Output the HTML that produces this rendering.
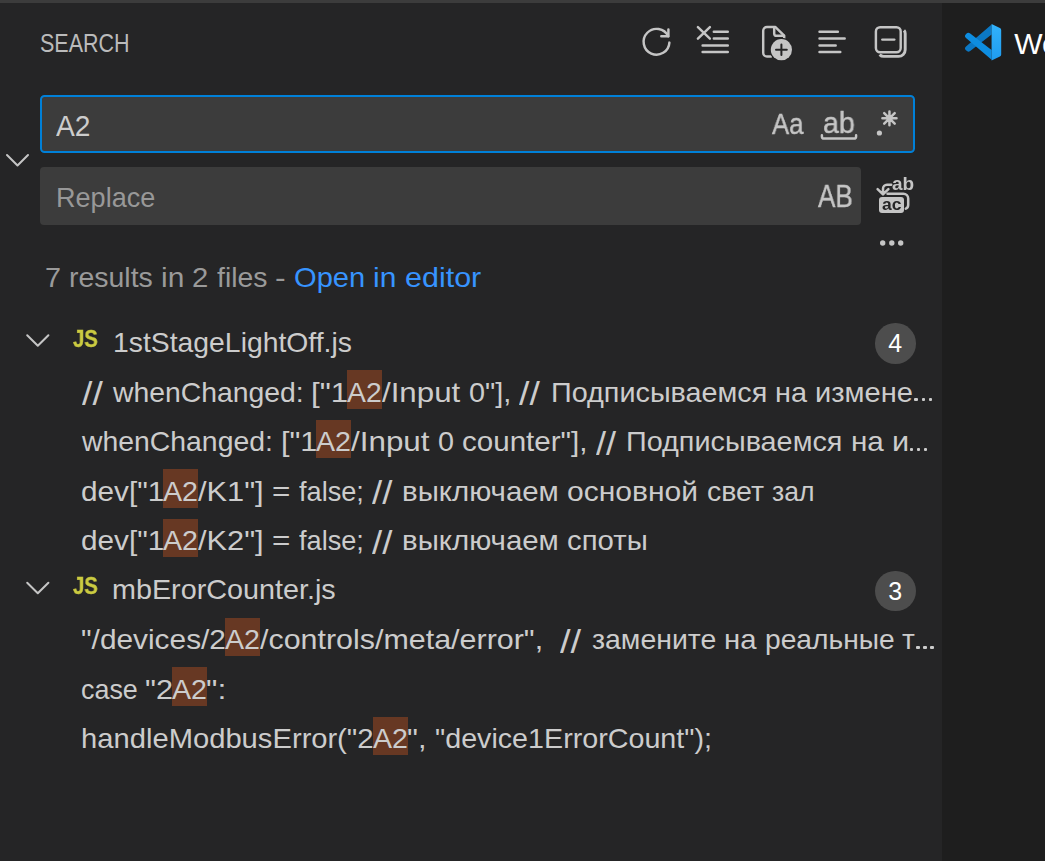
<!DOCTYPE html>
<html><head><meta charset="utf-8"><title>Search</title>
<style>
html,body{margin:0;padding:0;}
body{width:1045px;height:861px;overflow:hidden;background:#252526;position:relative;font-family:"Liberation Sans",sans-serif;}
.abs{position:absolute;}
.g{will-change:transform;}
.b{-webkit-text-stroke:0.45px #c5c5c5;}
.j{-webkit-text-stroke:0.35px #cbcb41;}
.dot{position:absolute;width:3.3px;height:3.3px;background:#cccccc;border-radius:1px;}
.t{position:absolute;white-space:pre;transform-origin:0 0;font-family:"Liberation Sans",sans-serif;}
.hl{position:absolute;background:#673823;width:35px;height:38.6px;}
.badge{position:absolute;width:40.5px;height:40.5px;border-radius:50%;background:#4d4d4d;color:#fff;font-size:25px;line-height:40.5px;text-align:center;}
svg{position:absolute;overflow:visible;}
</style></head><body>
<!-- backgrounds -->
<div class="abs" style="left:942px;top:0;width:103px;height:861px;background:#1e1e1e"></div>
<div class="abs" style="left:0;top:0;width:1045px;height:3px;background:#3c3c3c"></div>
<!-- search input -->
<div class="abs" style="left:40px;top:94.8px;width:875px;height:58.2px;box-sizing:border-box;border:2.25px solid #0080d8;border-radius:4.5px;background:#3c3c3c"></div>
<!-- replace input -->
<div class="abs" style="left:40px;top:167px;width:821px;height:58px;border-radius:4px;background:#3c3c3c"></div>
<!-- match highlights -->
<div class="hl" style="left:347px;top:370px"></div>
<div class="hl" style="left:316px;top:419.5px"></div>
<div class="hl" style="left:163px;top:469px"></div>
<div class="hl" style="left:163px;top:518.5px"></div>
<div class="hl" style="left:225px;top:617.5px"></div>
<div class="hl" style="left:172px;top:667px"></div>
<div class="hl" style="left:373px;top:716.5px"></div>
<!-- badges -->
<div class="badge" style="left:875px;top:323px">4</div>
<div class="badge" style="left:875px;top:570.5px">3</div>
<svg width="1045" height="861" viewBox="0 0 1045 861" style="left:0;top:0" fill="none" stroke="#c5c5c5" stroke-width="2.45" stroke-linecap="round" stroke-linejoin="round">
<!-- refresh -->
<path d="M669.4 42.6 A12.9 12.9 0 1 1 668.2 36.3"/>
<path d="M668.4 29.4 V36.2 H661.3"/>
<!-- clear all -->
<path d="M697.9 27.1 L709.9 38.6 M709.9 27.1 L697.9 38.6"/>
<path d="M713.8 31.8 H727.8 M713.8 38.4 H727.8 M702.6 45.5 H727.8 M702.6 52 H727.8"/>
<!-- new file -->
<path d="M771 56.5 H767 a3.8 3.8 0 0 1 -3.8 -3.8 V30.7 a3.8 3.8 0 0 1 3.8 -3.8 H775.2 L784.2 35.6 V40"/>
<path d="M774.2 27.4 V33.4 a2.4 2.4 0 0 0 2.4 2.4 H783.6"/>
<circle cx="781.4" cy="49.7" r="11.9" fill="#252526" stroke="none"/>
<circle cx="781.4" cy="49.7" r="10.6" fill="#c5c5c5" stroke="none"/>
<path d="M776 49.7 H786.8 M781.4 44.4 V55" stroke="#252526" stroke-width="2"/>
<!-- list view lines -->
<path d="M819.5 31.8 H837.9 M819.5 38.4 H844.7 M819.5 45.5 H835.7 M819.5 52 H840.3"/>
<!-- collapse all -->
<rect x="875.9" y="27.2" width="24.8" height="25.1" rx="4.2"/>
<path d="M879.6 54.6 Q881.4 56.4 883.6 56.4 H898.6 A6.6 6.6 0 0 0 905.2 49.8 V33.6 Q905.2 31.6 904 30.4" stroke-width="2.9" stroke-linecap="butt"/>
<path d="M882.3 39.6 H894.3"/>
<!-- whole word bracket -->
<path d="M821.9 135.2 V136.4 a2.2 2.2 0 0 0 2.2 2.2 H853.9 a2.2 2.2 0 0 0 2.2 -2.2 V135.2"/>
<!-- regex -->
<circle cx="879.4" cy="133" r="2.6" fill="#c5c5c5" stroke="none"/>
<path d="M889.45 111.4 V125.2 M882.4 118.3 H896.5 M884.2 113.05 L894.7 123.55 M894.7 113.05 L884.2 123.55" stroke-width="2.5"/>
<!-- replace all -->
<path d="M891.2 184.7 H887 a4 4 0 0 0 -4 4 V193.6 M877.6 189.2 L883 194.4 L888.4 189.2" stroke-width="2.5"/>
<rect x="879" y="197" width="25" height="16" rx="3" fill="#c5c5c5" stroke="none"/>
<path d="M887.5 193.7 H903.4 a4.8 4.8 0 0 1 4.8 4.8 V205 a4 4 0 0 1 -2.4 3.7" stroke-width="2.5"/>
<!-- ellipsis -->
<g fill="#c5c5c5" stroke="none"><circle cx="882.7" cy="243" r="2.7"/><circle cx="891.8" cy="243" r="2.7"/><circle cx="900.7" cy="243" r="2.7"/></g>
<!-- chevrons -->
<path d="M7 155 L17.5 165.5 L28 155" stroke-width="2"/>
<path d="M27.2 335.2 L37.8 345.8 L48.4 335.2" stroke-width="2"/>
<path d="M27.2 582.7 L37.8 593.3 L48.4 582.7" stroke-width="2"/>
</svg>
<!-- vscode logo -->
<svg width="36.4" height="36.4" viewBox="0 0 36.4 36.4" style="left:964.8px;top:23.7px">
<path d="M26.6 0.6 L26.6 10.5 L5.2 26.9 A2.9 2.9 0 0 1 1.3 26.6 L0.9 26.2 A2.6 2.6 0 0 1 1.0 22.4 Z" fill="#0b78c4"/>
<path d="M26.6 35.8 L26.6 25.9 L5.2 9.5 A2.9 2.9 0 0 0 1.3 9.8 L0.9 10.2 A2.6 2.6 0 0 0 1.0 14.0 Z" fill="#0e8de0"/>
<defs><linearGradient id="lg" x1="0" y1="0" x2="0" y2="1"><stop offset="0" stop-color="#32b2fb"/><stop offset="1" stop-color="#1f9cf0"/></linearGradient></defs>
<path d="M26.6 0 L34.9 4.0 A2 2 0 0 1 36.2 5.9 V30.5 A2 2 0 0 1 34.9 32.4 L26.6 36.4 Z" fill="url(#lg)"/>
</svg>

<span class="t" style="left:39.77px;top:29.99px;font-size:26px;line-height:26px;color:#bbbbbb;font-weight:400;transform:scaleX(0.8269)">SEARCH</span>
<span class="t" style="left:55.60px;top:110.61px;font-size:30px;line-height:30px;color:#cccccc;font-weight:400;transform:scaleX(0.9386)">A2</span>
<span class="t" style="left:55.90px;top:182.87px;font-size:28.5px;line-height:28.5px;color:#989898;font-weight:400;transform:scaleX(0.9497)">Replace</span>
<span class="t" style="left:44.99px;top:263.47px;font-size:28.5px;line-height:28.5px;color:#9a9a9a;font-weight:400;transform:scaleX(1.0097)">7 </span>
<span class="t" style="left:69.00px;top:263.47px;font-size:28.5px;line-height:28.5px;color:#9a9a9a;font-weight:400;transform:scaleX(0.9983)">results </span>
<span class="t" style="left:160.65px;top:263.47px;font-size:28.5px;line-height:28.5px;color:#9a9a9a;font-weight:400;transform:scaleX(1.0498)">in </span>
<span class="t" style="left:192.27px;top:263.47px;font-size:28.5px;line-height:28.5px;color:#9a9a9a;font-weight:400;transform:scaleX(1.0277)">2 </span>
<span class="t" style="left:216.70px;top:263.47px;font-size:28.5px;line-height:28.5px;color:#9a9a9a;font-weight:400;transform:scaleX(0.9950)">files </span>
<span class="t" style="left:274.88px;top:263.47px;font-size:28.5px;line-height:28.5px;color:#9a9a9a;font-weight:400;transform:scaleX(1.1250)">-</span>
<span class="t" style="left:293.98px;top:263.47px;font-size:28.5px;line-height:28.5px;color:#3794ff;font-weight:400;transform:scaleX(1.0214)">Open </span>
<span class="t" style="left:373.25px;top:263.47px;font-size:28.5px;line-height:28.5px;color:#3794ff;font-weight:400;transform:scaleX(1.0531)">in </span>
<span class="t" style="left:404.93px;top:263.47px;font-size:28.5px;line-height:28.5px;color:#3794ff;font-weight:400;transform:scaleX(1.0692)">editor</span>
<span class="t" style="left:113.01px;top:327.87px;font-size:28.5px;line-height:28.5px;color:#cccccc;font-weight:400;transform:scaleX(0.9944)">1stStageLightOff.js</span>
<span class="t" style="left:112.29px;top:575.37px;font-size:28.5px;line-height:28.5px;color:#cccccc;font-weight:400;transform:scaleX(1.0086)">mbErorCounter.js</span>
<span class="t" style="left:81.70px;top:377.17px;font-size:33px;line-height:33px;color:#cccccc;font-weight:400;transform:scaleX(1.1318)">// </span>
<span class="t" style="left:112.69px;top:377.57px;font-size:28.5px;line-height:28.5px;color:#cccccc;font-weight:400;transform:scaleX(0.9948)">whenChanged: </span>
<span class="t" style="left:311.11px;top:377.57px;font-size:28.5px;line-height:28.5px;color:#cccccc;font-weight:400;transform:scaleX(1.0955)">[&quot;1</span>
<span class="t" style="left:347.30px;top:377.57px;font-size:28.5px;line-height:28.5px;color:#cccccc;font-weight:400;transform:scaleX(0.9954)">A2</span>
<span class="t" style="left:382.00px;top:377.57px;font-size:28.5px;line-height:28.5px;color:#cccccc;font-weight:400;transform:scaleX(1.0969)">/Input </span>
<span class="t" style="left:468.99px;top:377.57px;font-size:28.5px;line-height:28.5px;color:#cccccc;font-weight:400;transform:scaleX(1.0119)">0&quot;], </span>
<span class="t" style="left:519.30px;top:377.17px;font-size:33px;line-height:33px;color:#cccccc;font-weight:400;transform:scaleX(1.1320)">// </span>
<span class="t" style="left:550.68px;top:377.57px;font-size:28.5px;line-height:28.5px;color:#cccccc;font-weight:400;transform:scaleX(1.0098)">Подписываемся </span>
<span class="t" style="left:774.99px;top:377.57px;font-size:28.5px;line-height:28.5px;color:#cccccc;font-weight:400;transform:scaleX(1.0125)">на </span>
<span class="t" style="left:814.98px;top:377.57px;font-size:28.5px;line-height:28.5px;color:#cccccc;font-weight:400;transform:scaleX(1.0194)">измене</span>
<span class="t" style="left:82.00px;top:427.07px;font-size:28.5px;line-height:28.5px;color:#cccccc;font-weight:400;transform:scaleX(0.9953)">whenChanged: </span>
<span class="t" style="left:280.55px;top:427.07px;font-size:28.5px;line-height:28.5px;color:#cccccc;font-weight:400;transform:scaleX(1.0730)">[&quot;1</span>
<span class="t" style="left:316.00px;top:427.07px;font-size:28.5px;line-height:28.5px;color:#cccccc;font-weight:400;transform:scaleX(1.0040)">A2</span>
<span class="t" style="left:351.00px;top:427.07px;font-size:28.5px;line-height:28.5px;color:#cccccc;font-weight:400;transform:scaleX(1.1007)">/Input </span>
<span class="t" style="left:438.29px;top:427.07px;font-size:28.5px;line-height:28.5px;color:#cccccc;font-weight:400;transform:scaleX(1.0097)">0 </span>
<span class="t" style="left:462.26px;top:427.07px;font-size:28.5px;line-height:28.5px;color:#cccccc;font-weight:400;transform:scaleX(1.0373)">counter&quot;], </span>
<span class="t" style="left:596.00px;top:426.67px;font-size:33px;line-height:33px;color:#cccccc;font-weight:400;transform:scaleX(1.0947)">// </span>
<span class="t" style="left:626.28px;top:427.07px;font-size:28.5px;line-height:28.5px;color:#cccccc;font-weight:400;transform:scaleX(1.0102)">Подписываемся </span>
<span class="t" style="left:850.66px;top:427.07px;font-size:28.5px;line-height:28.5px;color:#cccccc;font-weight:400;transform:scaleX(1.0403)">на </span>
<span class="t" style="left:891.72px;top:427.07px;font-size:28.5px;line-height:28.5px;color:#cccccc;font-weight:400;transform:scaleX(1.0769)">и</span>
<span class="t" style="left:80.66px;top:476.67px;font-size:28.5px;line-height:28.5px;color:#cccccc;font-weight:400;transform:scaleX(1.0425)">dev[&quot;1</span>
<span class="t" style="left:163.00px;top:476.67px;font-size:28.5px;line-height:28.5px;color:#cccccc;font-weight:400;transform:scaleX(1.0040)">A2</span>
<span class="t" style="left:198.00px;top:476.67px;font-size:28.5px;line-height:28.5px;color:#cccccc;font-weight:400;transform:scaleX(1.0799)">/K1&quot;] </span>
<span class="t" style="left:272.20px;top:476.67px;font-size:28.5px;line-height:28.5px;color:#cccccc;font-weight:400;transform:scaleX(1.1035)">= </span>
<span class="t" style="left:299.30px;top:476.67px;font-size:28.5px;line-height:28.5px;color:#cccccc;font-weight:400;transform:scaleX(0.9522)">false; </span>
<span class="t" style="left:371.70px;top:476.27px;font-size:33px;line-height:33px;color:#cccccc;font-weight:400;transform:scaleX(1.1086)">// </span>
<span class="t" style="left:402.27px;top:476.67px;font-size:28.5px;line-height:28.5px;color:#cccccc;font-weight:400;transform:scaleX(1.0322)">выключаем </span>
<span class="t" style="left:567.25px;top:476.67px;font-size:28.5px;line-height:28.5px;color:#cccccc;font-weight:400;transform:scaleX(1.0540)">основной </span>
<span class="t" style="left:706.70px;top:476.67px;font-size:28.5px;line-height:28.5px;color:#cccccc;font-weight:400;transform:scaleX(1.0008)">свет </span>
<span class="t" style="left:771.70px;top:476.67px;font-size:28.5px;line-height:28.5px;color:#cccccc;font-weight:400;transform:scaleX(0.9313)">зал</span>
<span class="t" style="left:80.66px;top:526.17px;font-size:28.5px;line-height:28.5px;color:#cccccc;font-weight:400;transform:scaleX(1.0425)">dev[&quot;1</span>
<span class="t" style="left:163.00px;top:526.17px;font-size:28.5px;line-height:28.5px;color:#cccccc;font-weight:400;transform:scaleX(1.0040)">A2</span>
<span class="t" style="left:198.00px;top:526.17px;font-size:28.5px;line-height:28.5px;color:#cccccc;font-weight:400;transform:scaleX(1.0799)">/K2&quot;] </span>
<span class="t" style="left:272.20px;top:526.17px;font-size:28.5px;line-height:28.5px;color:#cccccc;font-weight:400;transform:scaleX(1.1035)">= </span>
<span class="t" style="left:299.30px;top:526.17px;font-size:28.5px;line-height:28.5px;color:#cccccc;font-weight:400;transform:scaleX(0.9522)">false; </span>
<span class="t" style="left:371.70px;top:525.77px;font-size:33px;line-height:33px;color:#cccccc;font-weight:400;transform:scaleX(1.1086)">// </span>
<span class="t" style="left:402.27px;top:526.17px;font-size:28.5px;line-height:28.5px;color:#cccccc;font-weight:400;transform:scaleX(1.0322)">выключаем </span>
<span class="t" style="left:567.27px;top:526.17px;font-size:28.5px;line-height:28.5px;color:#cccccc;font-weight:400;transform:scaleX(1.0295)">споты</span>
<span class="t" style="left:80.95px;top:625.07px;font-size:28.5px;line-height:28.5px;color:#cccccc;font-weight:400;transform:scaleX(1.0470)">&quot;/devices/2</span>
<span class="t" style="left:225.00px;top:625.07px;font-size:28.5px;line-height:28.5px;color:#cccccc;font-weight:400;transform:scaleX(1.0040)">A2</span>
<span class="t" style="left:260.00px;top:625.07px;font-size:28.5px;line-height:28.5px;color:#cccccc;font-weight:400;transform:scaleX(1.0678)">/controls/meta/error&quot;,  </span>
<span class="t" style="left:560.00px;top:624.67px;font-size:33px;line-height:33px;color:#cccccc;font-weight:400;transform:scaleX(1.1525)">// </span>
<span class="t" style="left:591.70px;top:625.07px;font-size:28.5px;line-height:28.5px;color:#cccccc;font-weight:400;transform:scaleX(0.9983)">замените </span>
<span class="t" style="left:723.97px;top:625.07px;font-size:28.5px;line-height:28.5px;color:#cccccc;font-weight:400;transform:scaleX(1.0277)">на </span>
<span class="t" style="left:764.61px;top:625.07px;font-size:28.5px;line-height:28.5px;color:#cccccc;font-weight:400;transform:scaleX(0.9890)">реальные </span>
<span class="t" style="left:902.10px;top:625.07px;font-size:28.5px;line-height:28.5px;color:#cccccc;font-weight:400;transform:scaleX(0.9846)">т</span>
<span class="t" style="left:80.76px;top:674.57px;font-size:28.5px;line-height:28.5px;color:#cccccc;font-weight:400;transform:scaleX(0.9439)">case </span>
<span class="t" style="left:144.92px;top:674.57px;font-size:28.5px;line-height:28.5px;color:#cccccc;font-weight:400;transform:scaleX(1.0781)">&quot;2</span>
<span class="t" style="left:172.00px;top:674.57px;font-size:28.5px;line-height:28.5px;color:#cccccc;font-weight:400;transform:scaleX(1.0040)">A2</span>
<span class="t" style="left:205.88px;top:674.57px;font-size:28.5px;line-height:28.5px;color:#cccccc;font-weight:400;transform:scaleX(1.1246)">&quot;:</span>
<span class="t" style="left:80.98px;top:724.07px;font-size:28.5px;line-height:28.5px;color:#cccccc;font-weight:400;transform:scaleX(1.0239)">handleModbusError</span>
<span class="t" style="left:337.27px;top:724.07px;font-size:28.5px;line-height:28.5px;color:#cccccc;font-weight:400;transform:scaleX(1.0325)">(&quot;2</span>
<span class="t" style="left:373.00px;top:724.07px;font-size:28.5px;line-height:28.5px;color:#cccccc;font-weight:400;transform:scaleX(1.0040)">A2</span>
<span class="t" style="left:406.92px;top:724.07px;font-size:28.5px;line-height:28.5px;color:#cccccc;font-weight:400;transform:scaleX(1.0789)">&quot;, </span>
<span class="t" style="left:434.99px;top:724.07px;font-size:28.5px;line-height:28.5px;color:#cccccc;font-weight:400;transform:scaleX(1.0061)">&quot;device1ErrorCount&quot;);</span>
<span class="t g b" style="left:772.20px;top:109.11px;font-size:30px;line-height:30px;color:#c5c5c5;font-weight:400;transform:scaleX(0.8592)">Aa</span>
<span class="t g b" style="left:822.55px;top:108.01px;font-size:30px;line-height:30px;color:#c5c5c5;font-weight:400;transform:scaleX(0.9500)">ab</span>
<span class="t g b" style="left:817.60px;top:180.21px;font-size:32px;line-height:32px;color:#c5c5c5;font-weight:400;transform:scaleX(0.8175)">AB</span>
<span class="t g" style="left:892.20px;top:176.09px;font-size:17.5px;line-height:17.5px;color:#c5c5c5;font-weight:700;transform:scaleX(1.0845)">ab</span>
<span class="t g" style="left:881.60px;top:196.21px;font-size:17px;line-height:17px;color:#252526;font-weight:700;transform:scaleX(1.0296)">ac</span>
<span class="t g j" style="left:72.60px;top:326.69px;font-size:24.7px;line-height:24.7px;color:#cbcb41;font-weight:700;transform:scaleX(0.8207)">JS</span>
<span class="t g j" style="left:72.60px;top:574.19px;font-size:24.7px;line-height:24.7px;color:#cbcb41;font-weight:700;transform:scaleX(0.8207)">JS</span>
<span class="t" style="left:1014.20px;top:28.81px;font-size:30px;line-height:30px;color:#ffffff;font-weight:400;transform:scaleX(1.0000)">We</span>
<div class="dot" style="left:914.45px;top:398.20px"></div>
<div class="dot" style="left:921.65px;top:398.20px"></div>
<div class="dot" style="left:929.15px;top:398.20px"></div>
<div class="dot" style="left:909.75px;top:447.70px"></div>
<div class="dot" style="left:917.00px;top:447.70px"></div>
<div class="dot" style="left:924.20px;top:447.70px"></div>
<div class="dot" style="left:916.40px;top:645.70px"></div>
<div class="dot" style="left:923.30px;top:645.70px"></div>
<div class="dot" style="left:930.40px;top:645.70px"></div>
</body></html>
